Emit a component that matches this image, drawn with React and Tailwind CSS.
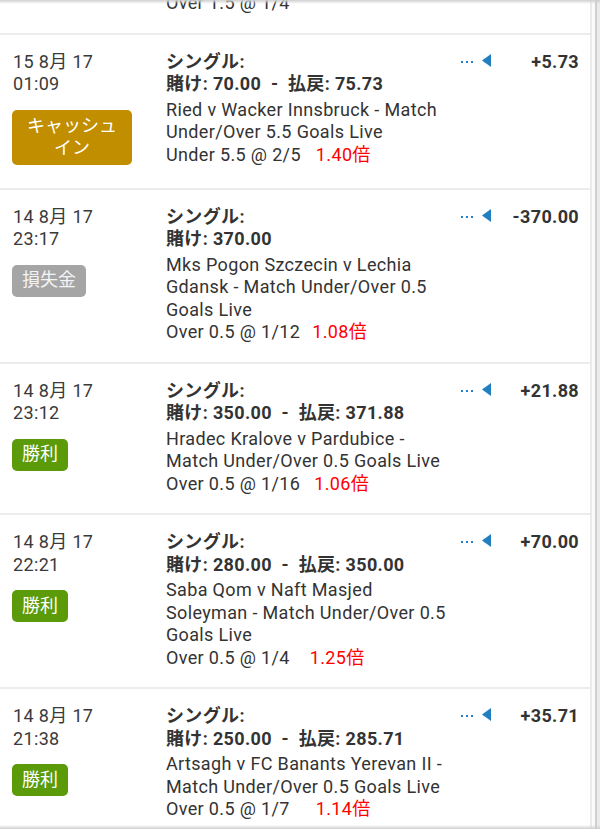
import React from "react";

const rows = [
  {
    date: "15 8月 17",
    time: "01:09",
    badge: { label: "キャッシュイン", cls: "w-[120px] h-[55px] bg-[#c18e00] text-white leading-[22px] px-[12px]" },
    stake: "70.00",
    payout: "75.73",
    desc: "Ried v Wacker Innsbruck - Match Under/Over 5.5 Goals Live",
    sel: "Under 5.5 @ 2/5",
    odds: "1.40倍",
    oddsCls: "ml-[15px]",
    amount: "+5.73",
  },
  {
    date: "14 8月 17",
    time: "23:17",
    badge: { label: "損失金", cls: "h-[32px] px-[10px] bg-[#a5a5a5] text-[#f4f4f4]" },
    stake: "370.00",
    payout: null,
    desc: "Mks Pogon Szczecin v Lechia Gdansk - Match Under/Over 0.5 Goals Live",
    sel: "Over 0.5 @ 1/12",
    odds: "1.08倍",
    oddsCls: "ml-[12px]",
    amount: "-370.00",
  },
  {
    date: "14 8月 17",
    time: "23:12",
    badge: { label: "勝利", cls: "h-[32px] px-[10px] bg-[#5b9b0a] text-white" },
    stake: "350.00",
    payout: "371.88",
    desc: "Hradec Kralove v Pardubice - Match Under/Over 0.5 Goals Live",
    sel: "Over 0.5 @ 1/16",
    odds: "1.06倍",
    oddsCls: "ml-[14px]",
    amount: "+21.88",
  },
  {
    date: "14 8月 17",
    time: "22:21",
    badge: { label: "勝利", cls: "h-[32px] px-[10px] bg-[#5b9b0a] text-white" },
    stake: "280.00",
    payout: "350.00",
    desc: "Saba Qom v Naft Masjed Soleyman - Match Under/Over 0.5 Goals Live",
    sel: "Over 0.5 @ 1/4",
    odds: "1.25倍",
    oddsCls: "ml-[20px]",
    amount: "+70.00",
  },
  {
    date: "14 8月 17",
    time: "21:38",
    badge: { label: "勝利", cls: "h-[32px] px-[10px] bg-[#5b9b0a] text-white" },
    stake: "250.00",
    payout: "285.71",
    desc: "Artsagh v FC Banants Yerevan II - Match Under/Over 0.5 Goals Live",
    sel: "Over 0.5 @ 1/7",
    odds: "1.14倍",
    oddsCls: "ml-[26px]",
    amount: "+35.71",
  },
];

function Menu() {
  return (
    <div className="flex items-start ml-[9px]">
      <div className="flex gap-[3px] mt-[10px]">
        <span className="block w-[2px] h-[2px] bg-[#2282c4]" />
        <span className="block w-[2px] h-[2px] bg-[#2282c4]" />
        <span className="block w-[2px] h-[2px] bg-[#2282c4]" />
      </div>
      <svg width="9" height="13" viewBox="0 0 9 13" className="ml-[9px] mt-[3px]">
        <path d="M9 0 L0 6.5 L9 13 Z" fill="#1f7fc0" />
      </svg>
    </div>
  );
}

function Row({ r }) {
  return (
    <div className="flex pt-4 pb-[18px] pl-[13px] pr-[11px] border-b-2 border-[#ececec] tracking-[0.35px]">
      <div className="w-[153px] shrink-0 text-[18px] leading-[22.5px] text-[#3a3a3a]">
        <div>{r.date}</div>
        <div>{r.time}</div>
        <div className="flex">
          <div
            className={
              "mt-[14px] mb-[5px] -ml-[1px] rounded-[5px] flex items-center justify-center text-center text-[18px] tracking-normal " +
              r.badge.cls
            }
          >
            {r.badge.label}
          </div>
        </div>
      </div>
      <div className="w-[286px] shrink-0 text-[18px] leading-[22.5px] text-[#333]">
        <div className="font-bold">シングル:</div>
        <div className="font-bold whitespace-pre">
          {"賭け: " + r.stake}
          {r.payout ? "  -  払戻: " + r.payout : ""}
        </div>
        <div className="mt-[3px]">{r.desc}</div>
        <div>
          {r.sel}
          <span className={"text-[#ff0000] " + r.oddsCls}>{r.odds}</span>
        </div>
      </div>
      <div className="flex-1 flex justify-between items-start">
        <Menu />
        <div className="font-bold text-[18px] leading-[22.5px] text-[#333]">{r.amount}</div>
      </div>
    </div>
  );
}

export default function App() {
  return (
    <div
      className="relative w-[600px] h-[829px] overflow-hidden bg-[#ececec] flex"
      style={{ fontFamily: "Roboto, 'Noto Sans CJK JP', sans-serif" }}
    >
      <div className="w-[590px] shrink-0 bg-white">
        <div className="flex -mt-[8px] pb-[18px] pl-[13px] border-b-2 border-[#ececec] tracking-[0.35px]">
          <div className="w-[153px] shrink-0" />
          <div className="text-[18px] leading-[22.5px] text-[#333]">Over 1.5 @ 1/4</div>
        </div>
        {rows.map((r, i) => (
          <Row key={i} r={r} />
        ))}
      </div>
      <div className="flex shrink-0 h-full">
        <div className="w-[2px] bg-[#ebebeb]" />
        <div className="w-[3px] bg-[#fafafa]" />
        <div className="w-[2px] bg-[#cfcfcf]" />
        <div className="w-[3px] bg-[#ebebeb]" />
      </div>
      <div className="absolute top-0 left-0 right-0 h-[4px] bg-gradient-to-b from-[#d0d0d0] to-transparent" />
      <div className="absolute bottom-0 left-0 right-0 h-[4px] bg-gradient-to-t from-[#cfcfcf] to-transparent" />
    </div>
  );
}
